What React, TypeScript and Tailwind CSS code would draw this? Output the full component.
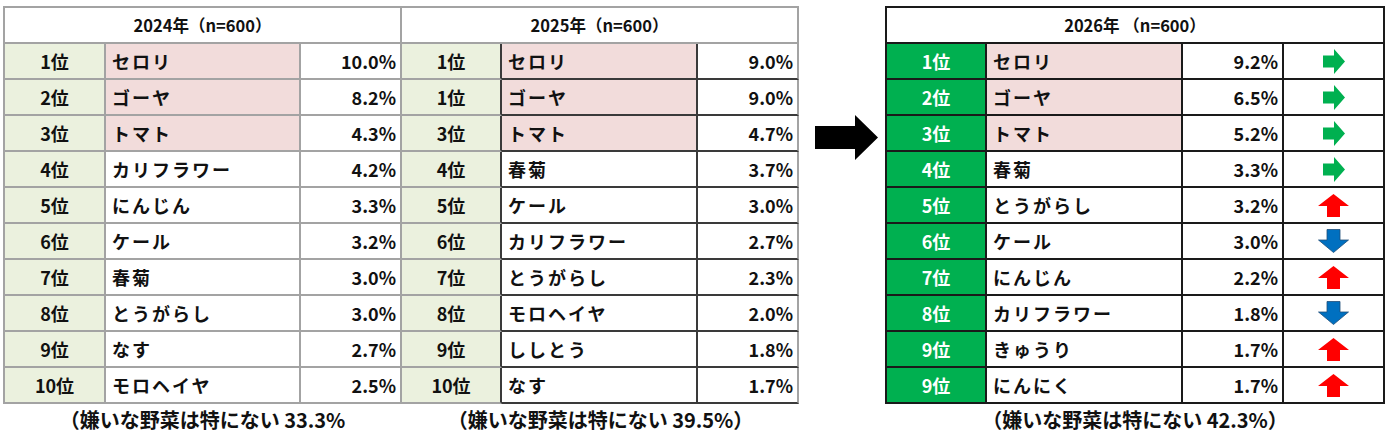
type Trend = 'flat' | 'up' | 'down'

type Row = {
  rank: string
  name: string
  pct: string
  pink?: boolean
  trend?: Trend
}

const rows2024: Row[] = [
  { rank: '1位', name: 'セロリ', pct: '10.0%', pink: true },
  { rank: '2位', name: 'ゴーヤ', pct: '8.2%', pink: true },
  { rank: '3位', name: 'トマト', pct: '4.3%', pink: true },
  { rank: '4位', name: 'カリフラワー', pct: '4.2%' },
  { rank: '5位', name: 'にんじん', pct: '3.3%' },
  { rank: '6位', name: 'ケール', pct: '3.2%' },
  { rank: '7位', name: '春菊', pct: '3.0%' },
  { rank: '8位', name: 'とうがらし', pct: '3.0%' },
  { rank: '9位', name: 'なす', pct: '2.7%' },
  { rank: '10位', name: 'モロヘイヤ', pct: '2.5%' },
]

const rows2025: Row[] = [
  { rank: '1位', name: 'セロリ', pct: '9.0%', pink: true },
  { rank: '1位', name: 'ゴーヤ', pct: '9.0%', pink: true },
  { rank: '3位', name: 'トマト', pct: '4.7%', pink: true },
  { rank: '4位', name: '春菊', pct: '3.7%' },
  { rank: '5位', name: 'ケール', pct: '3.0%' },
  { rank: '6位', name: 'カリフラワー', pct: '2.7%' },
  { rank: '7位', name: 'とうがらし', pct: '2.3%' },
  { rank: '8位', name: 'モロヘイヤ', pct: '2.0%' },
  { rank: '9位', name: 'ししとう', pct: '1.8%' },
  { rank: '10位', name: 'なす', pct: '1.7%' },
]

const rows2026: Row[] = [
  { rank: '1位', name: 'セロリ', pct: '9.2%', pink: true, trend: 'flat' },
  { rank: '2位', name: 'ゴーヤ', pct: '6.5%', pink: true, trend: 'flat' },
  { rank: '3位', name: 'トマト', pct: '5.2%', pink: true, trend: 'flat' },
  { rank: '4位', name: '春菊', pct: '3.3%', trend: 'flat' },
  { rank: '5位', name: 'とうがらし', pct: '3.2%', trend: 'up' },
  { rank: '6位', name: 'ケール', pct: '3.0%', trend: 'down' },
  { rank: '7位', name: 'にんじん', pct: '2.2%', trend: 'up' },
  { rank: '8位', name: 'カリフラワー', pct: '1.8%', trend: 'down' },
  { rank: '9位', name: 'きゅうり', pct: '1.7%', trend: 'up' },
  { rank: '9位', name: 'にんにく', pct: '1.7%', trend: 'up' },
]

function TrendArrow({ trend }: { trend: Trend }) {
  if (trend === 'flat') {
    return (
      <svg width="22" height="25" viewBox="0 0 22 25">
        <polygon points="0,6.5 11,6.5 11,0 22,12.5 11,25 11,18.5 0,18.5" fill="#00b050" />
      </svg>
    )
  }
  if (trend === 'up') {
    return (
      <svg width="31" height="23" viewBox="0 0 31 23">
        <polygon points="15.5,0 31,12 22,12 22,23 9,23 9,12 0,12" fill="#ff0000" />
      </svg>
    )
  }
  return (
    <svg width="31" height="24" viewBox="0 0 31 24">
      <polygon
        points="9,0.5 22,0.5 22,11 30.5,11 15.5,23.5 0.5,11 9,11"
        fill="#0070c0"
        stroke="#1f4e79"
        strokeWidth="0.8"
      />
    </svg>
  )
}

function Footer({ text }: { text: string }) {
  return <p className="mt-[4px] text-center text-[20px] leading-6 font-bold text-[#111]">{text}</p>
}

// 2024 and 2025 share a border, so they sit in one flex row
function PastTable({
  title,
  rows,
  cols,
  first,
  dark,
}: {
  title: string
  rows: Row[]
  cols: string
  first?: boolean
  dark?: boolean
}) {
  const inner = dark ? 'border-[#3a3a3a]' : 'border-[#a3a3a3]'
  return (
    <div>
      <div className={`grid ${cols} border-t-2 border-[#a3a3a3] ${first ? 'border-l-2' : ''}`}>
        <div className="col-span-3 flex h-[36px] items-center justify-center border-r-2 border-b-2 border-[#a3a3a3] bg-white text-[16.5px] font-bold text-[#111]">
          {title}
        </div>
        {rows.map((r, i) => (
          <div key={i} className="contents">
            <div className={`flex h-[36px] items-center justify-center border-r-2 border-b-2 border-[#a3a3a3] bg-[#ebf1de] text-[18px] font-bold text-[#111] ${dark ? 'border-r-[#3a3a3a]' : ''}`}>
              {r.rank}
            </div>
            <div className={`flex h-[36px] items-center border-r-2 border-b-2 ${inner} pl-[6px] text-[18px] font-bold tracking-[2px] text-[#111] ${r.pink ? 'bg-[#f2dcdb]' : 'bg-white'}`}>
              {r.name}
            </div>
            <div className={`flex h-[36px] items-center justify-end border-r-2 border-b-2 border-[#a3a3a3] ${dark ? 'border-b-[#3a3a3a]' : ''} bg-white pr-[4px] text-[18px] font-bold text-[#111]`}>
              {r.pct}
            </div>
          </div>
        ))}
      </div>
    </div>
  )
}

function CurrentTable() {
  return (
    <div className="grid grid-cols-[100px_196px_101px_101px] border-t-2 border-l-2 border-[#1a1a1a]">
      <div className="col-span-4 flex h-[36px] items-center justify-center border-r-2 border-b-2 border-[#1a1a1a] bg-white text-[16.5px] font-bold text-[#111]">
        2026年 （n=600）
      </div>
      {rows2026.map((r, i) => (
        <div key={i} className="contents">
          <div className="flex h-[36px] items-center justify-center border-r-2 border-b-2 border-[#1a1a1a] bg-[#00b050] text-[18px] font-bold text-white">
            {r.rank}
          </div>
          <div className={`flex h-[36px] items-center border-r-2 border-b-2 border-[#1a1a1a] pl-[6px] text-[18px] font-bold tracking-[2px] text-[#111] ${r.pink ? 'bg-[#f2dcdb]' : 'bg-white'}`}>
            {r.name}
          </div>
          <div className="flex h-[36px] items-center justify-end border-r-2 border-b-2 border-[#1a1a1a] bg-white pr-[4px] text-[18px] font-bold text-[#111]">
            {r.pct}
          </div>
          <div className="flex h-[36px] items-center justify-center border-r-2 border-b-2 border-[#1a1a1a] bg-white">
            {r.trend && <TrendArrow trend={r.trend} />}
          </div>
        </div>
      ))}
    </div>
  )
}

export default function App() {
  return (
    <div
      className="flex h-[444px] w-[1391px] items-start bg-white pt-[6px] pl-[3px]"
      style={{ fontFamily: '"Noto Sans CJK JP", "Noto Sans", sans-serif' }}
    >
      <div>
        <PastTable first title="2024年（n=600）" rows={rows2024} cols="grid-cols-[101px_195px_101px]" />
        <Footer text="（嫌いな野菜は特にない 33.3%" />
      </div>
      <div>
        <PastTable dark title="2025年（n=600）" rows={rows2025} cols="grid-cols-[100px_196px_101px]" />
        <Footer text="（嫌いな野菜は特にない 39.5%）" />
      </div>
      <div className="mt-[109px] mr-[7px] ml-[16px]">
        <svg width="63" height="45" viewBox="0 0 63 45">
          <polygon points="0,11 40,11 40,0 63,22.5 40,45 40,34 0,34" fill="#000" />
        </svg>
      </div>
      <div>
        <CurrentTable />
        <Footer text="（嫌いな野菜は特にない 42.3%）" />
      </div>
    </div>
  )
}
